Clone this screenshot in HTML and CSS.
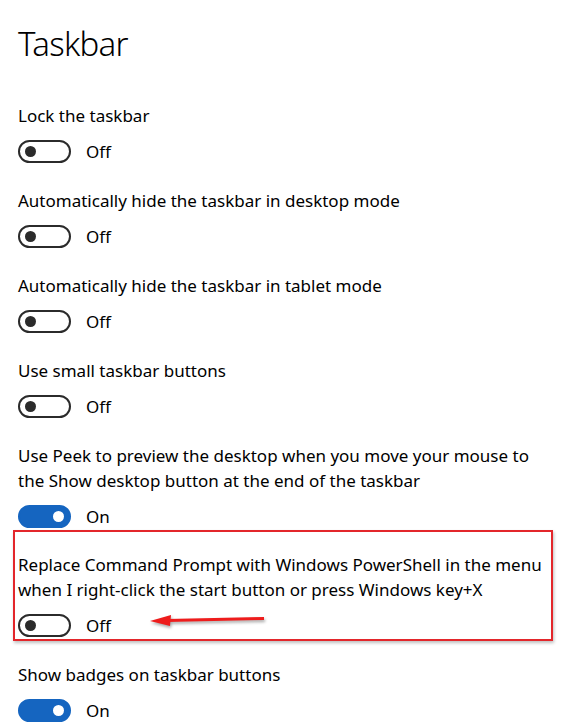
FILE: index.html
```html
<!DOCTYPE html>
<html lang="en">
<head>
    <meta charset="UTF-8">
    <title>Taskbar</title>
    <link rel="stylesheet" href="styles.css">
</head>
<body>

<div class="page">
    <h1 class="title">Taskbar</h1>

    <div class="setting">
        <div class="label">Lock the taskbar</div>
        <div class="switch-row">
            <span class="switch"></span>
            <span class="state">Off</span>
        </div>
    </div>

    <div class="setting">
        <div class="label">Automatically hide the taskbar in desktop mode</div>
        <div class="switch-row">
            <span class="switch"></span>
            <span class="state">Off</span>
        </div>
    </div>

    <div class="setting">
        <div class="label">Automatically hide the taskbar in tablet mode</div>
        <div class="switch-row">
            <span class="switch"></span>
            <span class="state">Off</span>
        </div>
    </div>

    <div class="setting">
        <div class="label">Use small taskbar buttons</div>
        <div class="switch-row">
            <span class="switch"></span>
            <span class="state">Off</span>
        </div>
    </div>

    <div class="setting">
        <div class="label">Use Peek to preview the desktop when you move your mouse to<br>the Show desktop button at the end of the taskbar</div>
        <div class="switch-row">
            <span class="switch on"></span>
            <span class="state">On</span>
        </div>
    </div>

    <!-- highlighted setting with annotation -->
    <div class="setting marked">
        <div class="label">Replace Command Prompt with Windows PowerShell in the menu<br>when I right-click the start button or press Windows key+X</div>
        <div class="switch-row">
            <span class="switch"></span>
            <span class="state">Off</span>
        </div>
        <svg class="arrow" width="124" height="18" viewBox="0 0 124 18">
            <line x1="20" y1="8.6" x2="117" y2="6.5" stroke="#ee1c1c" stroke-width="3"/>
            <polygon points="3,9 24,3 23,14" fill="#ee1c1c"/>
        </svg>
    </div>

    <div class="setting">
        <div class="label">Show badges on taskbar buttons</div>
        <div class="switch-row">
            <span class="switch on"></span>
            <span class="state">On</span>
        </div>
    </div>
</div>

</body>
</html>
```

FILE: styles.css
```css
body {
    margin: 0;
    background-color: #fff;
    color: #000;
    font-family: "Noto Sans", "Open Sans", sans-serif;
}

.page {
    padding: 0 0 0 18px;
}

.title {
    margin: 0;
    padding-top: 21px;
    height: 103px;
    box-sizing: border-box;
    font-size: 33px;
    font-weight: 300;
    letter-spacing: -0.7px;
    line-height: 46px;
}

.setting {
    padding-bottom: 25px;
}

.label {
    font-size: 17px;
    line-height: 25px;
    white-space: nowrap;
}

.switch-row {
    display: flex;
    align-items: center;
    height: 23px;
    margin-top: 12px;
}

.switch {
    position: relative;
    width: 53px;
    height: 23px;
    box-sizing: border-box;
    border: 2px solid #2b2b2b;
    border-radius: 12px;
}

.switch::after {
    content: "";
    position: absolute;
    top: 4px;
    left: 5px;
    width: 11px;
    height: 11px;
    border-radius: 50%;
    background-color: #2b2b2b;
}

.switch.on {
    background-color: #1565c0;
    border-color: #1565c0;
}

.switch.on::after {
    left: auto;
    right: 5px;
    background-color: #fff;
}

.state {
    margin-left: 15px;
    font-size: 17px;
}

.marked {
    position: relative;
    margin: -23px 11px 0 -5px;
    padding: 20px 0 2px 3px;
    border: 2px solid #e3262b;
    box-shadow: 1px 2px 3px rgba(0, 0, 0, 0.25);
}

.marked + .setting {
    margin-top: 21px;
}

.arrow {
    position: absolute;
    left: 132px;
    bottom: 9px;
    filter: drop-shadow(1px 2px 1.5px rgba(0, 0, 0, 0.35));
}
```
